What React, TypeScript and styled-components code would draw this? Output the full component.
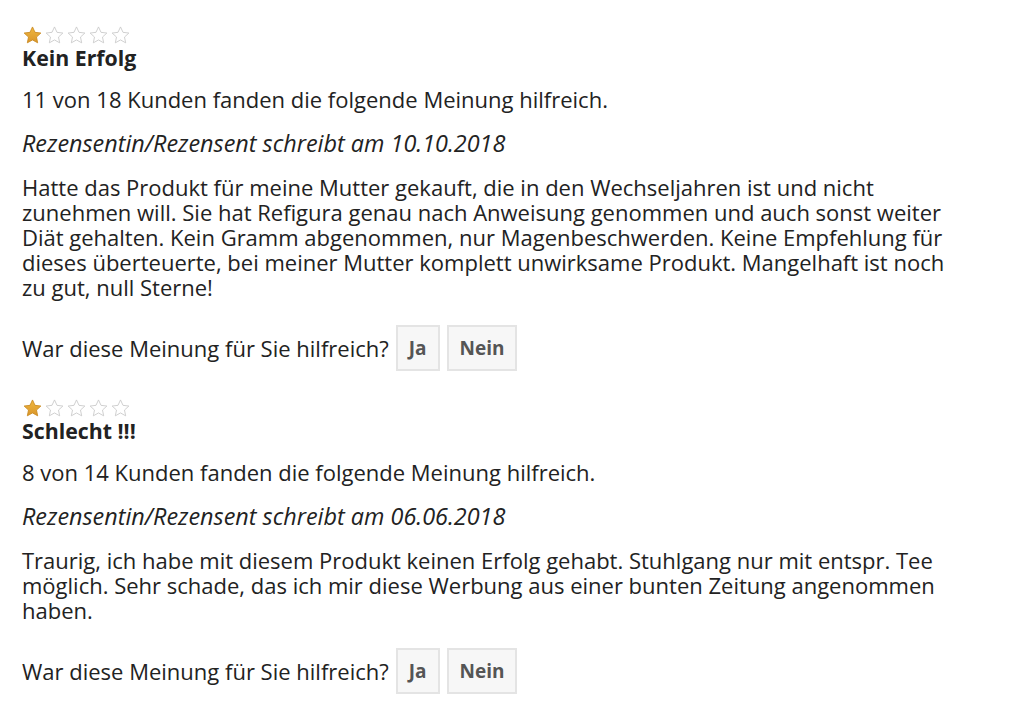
import styled, { createGlobalStyle } from "styled-components";

const GlobalStyle = createGlobalStyle`
    body {
        margin: 0;
        background: #ffffff;
        font-family: "Open Sans", "Noto Sans", sans-serif;
        color: #222222;
    }
`;

type ReviewData = {
    rating: number;
    title: string;
    helpful: string;
    author: string;
    text: string;
};

const reviews: ReviewData[] = [
    {
        rating: 1,
        title: "Kein Erfolg",
        helpful: "11 von 18 Kunden fanden die folgende Meinung hilfreich.",
        author: "Rezensentin/Rezensent schreibt am 10.10.2018",
        text: "Hatte das Produkt für meine Mutter gekauft, die in den Wechseljahren ist und nicht zunehmen will. Sie hat Refigura genau nach Anweisung genommen und auch sonst weiter Diät gehalten. Kein Gramm abgenommen, nur Magenbeschwerden. Keine Empfehlung für dieses überteuerte, bei meiner Mutter komplett unwirksame Produkt. Mangelhaft ist noch zu gut, null Sterne!",
    },
    {
        rating: 1,
        title: "Schlecht !!!",
        helpful: "8 von 14 Kunden fanden die folgende Meinung hilfreich.",
        author: "Rezensentin/Rezensent schreibt am 06.06.2018",
        text: "Traurig, ich habe mit diesem Produkt keinen Erfolg gehabt. Stuhlgang nur mit entspr. Tee möglich. Sehr schade, das ich mir diese Werbung aus einer bunten Zeitung angenommen haben.",
    },
];

const Star = ({ filled }: { filled: boolean }) => (
    <svg width="21" height="18" viewBox="0 0 24 23">
        <defs>
            <linearGradient id="starGold" x1="0" y1="0" x2="0" y2="1">
                <stop offset="0" stopColor="#f0b840" />
                <stop offset="1" stopColor="#d9952a" />
            </linearGradient>
        </defs>
        <path
            d="M12 1.2l3.2 6.9 7.5.9-5.6 5.1 1.5 7.4L12 17.8l-6.6 3.7 1.5-7.4L1.3 9l7.5-.9z"
            fill={filled ? "url(#starGold)" : "#ffffff"}
            stroke={filled ? "#c98a22" : "#c8c8c8"}
            strokeWidth="1.1"
            strokeLinejoin="round"
        />
    </svg>
);

const Page = () => (
    <>
        <GlobalStyle />
        <List>
            {reviews.map((r) => (
                <Review key={r.author}>
                    <Stars>
                        {[0, 1, 2, 3, 4].map((i) => (
                            <Star key={i} filled={i < r.rating} />
                        ))}
                    </Stars>
                    <Title>{r.title}</Title>
                    <Line>{r.helpful}</Line>
                    <Author>{r.author}</Author>
                    <Body>{r.text}</Body>
                    <Vote>
                        <span>War diese Meinung für Sie hilfreich?</span>
                        <VoteButton>Ja</VoteButton>
                        <VoteButton>Nein</VoteButton>
                    </Vote>
                </Review>
            ))}
        </List>
    </>
);

export default Page;

const List = styled.div`
    display: flex;
    flex-direction: column;
    gap: 27px;
    padding: 25px 22px 0 22px;
    width: 940px;
`;

const Review = styled.div`
    display: flex;
    flex-direction: column;
    font-size: 22px;
    line-height: 25px;
`;

const Stars = styled.div`
    display: flex;
    gap: 1px;
    height: 20px;
    align-items: center;
`;

const Title = styled.div`
    font-size: 21.3px;
    font-weight: 700;
    color: #222222;
`;

const Line = styled.p`
    margin: 17px 0 0 0;
`;

const Author = styled.p`
    margin: 19px 0 0 0;
    font-style: italic;
    font-size: 23.4px;
`;

const Body = styled.p`
    margin: 19px 0 0 0;
`;

const Vote = styled.div`
    display: flex;
    align-items: center;
    gap: 7px;
    margin-top: 25px;
`;

const VoteButton = styled.button`
    font-family: "Open Sans", "Noto Sans", sans-serif;
    font-size: 19px;
    font-weight: 700;
    color: #555555;
    background: #f7f7f7;
    border: 2px solid #e4e4e4;
    height: 46px;
    padding: 0 11px;
    cursor: pointer;
`;
